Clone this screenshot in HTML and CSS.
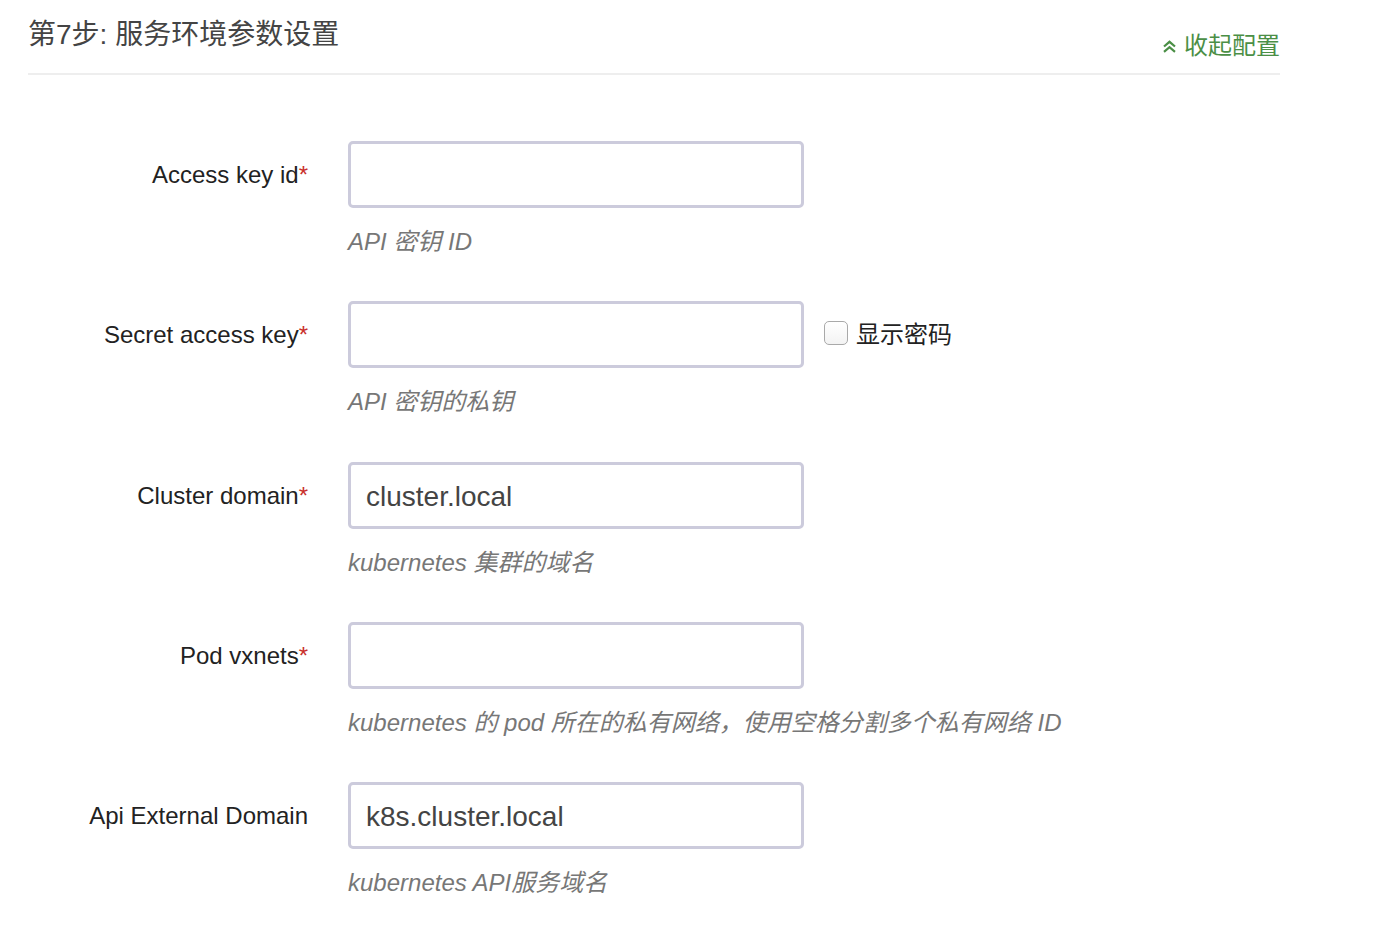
FILE: index.html
```html
<!DOCTYPE html>
<html lang="zh-CN">
<head>
<meta charset="utf-8">
<title>服务环境参数设置</title>
<link rel="stylesheet" href="styles.css">
</head>
<body>
<div class="page">
  <div class="section-header">
    <h3 class="section-title">第7步: 服务环境参数设置</h3>
    <a class="collapse-link" href="#">
      <svg class="chev" width="15" height="13" viewBox="0 0 15 13"><polyline points="2,6.5 7.5,1.8 13,6.5" fill="none" stroke="#4b8f46" stroke-width="2.2"/><polyline points="2,11.8 7.5,7.1 13,11.8" fill="none" stroke="#4b8f46" stroke-width="2.2"/></svg>
      收起配置
    </a>
  </div>

  <form class="env-form">
    <div class="form-group">
      <label class="control-label">Access key id<span class="req">*</span></label>
      <div class="controls">
        <div class="input-line"><input class="form-input" type="text" value=""></div>
        <p class="help">API 密钥 ID</p>
      </div>
    </div>

    <div class="form-group">
      <label class="control-label">Secret access key<span class="req">*</span></label>
      <div class="controls">
        <div class="input-line">
          <input class="form-input" type="password" value="">
          <label class="show-pwd"><span class="checkbox"></span>显示密码</label>
        </div>
        <p class="help">API 密钥的私钥</p>
      </div>
    </div>

    <div class="form-group">
      <label class="control-label">Cluster domain<span class="req">*</span></label>
      <div class="controls">
        <div class="input-line"><input class="form-input" type="text" value="cluster.local"></div>
        <p class="help">kubernetes 集群的域名</p>
      </div>
    </div>

    <div class="form-group">
      <label class="control-label">Pod vxnets<span class="req">*</span></label>
      <div class="controls">
        <div class="input-line"><input class="form-input" type="text" value=""></div>
        <p class="help">kubernetes 的 pod 所在的私有网络，使用空格分割多个私有网络 ID</p>
      </div>
    </div>

    <div class="form-group">
      <label class="control-label">Api External Domain</label>
      <div class="controls">
        <div class="input-line"><input class="form-input" type="text" value="k8s.cluster.local"></div>
        <p class="help">kubernetes API服务域名</p>
      </div>
    </div>
  </form>
</div>
</body>
</html>
```

FILE: styles.css
```css
* { box-sizing: border-box; }

html, body {
  margin: 0;
  padding: 0;
  background: #fff;
}

body {
  font-family: "Liberation Sans", "Noto Sans CJK SC", sans-serif;
  color: #222;
}

.page {
  padding-left: 28px;
  width: 1280px;
}

.section-header {
  display: flex;
  justify-content: space-between;
  align-items: flex-start;
  height: 75px;
  border-bottom: 2px solid #eeeeee;
}

.section-title {
  margin: 15px 0 0 0;
  font-size: 28px;
  line-height: 40px;
  font-weight: normal;
  color: #444;
}

.collapse-link {
  margin-top: 31px;
  font-size: 24px;
  line-height: 30px;
  color: #4b8f46;
  text-decoration: none;
  display: flex;
  align-items: center;
}

.chev {
  margin-right: 7px;
  margin-top: 1px;
}

.env-form {
  padding-top: 66px;
}

.form-group {
  display: flex;
  align-items: flex-start;
  height: 160.25px;
}

.control-label {
  width: 280px;
  height: 67px;
  line-height: 67px;
  text-align: right;
  font-size: 24px;
  color: #222;
}

.req {
  color: #c9302c;
}

.controls {
  margin-left: 40px;
}

.input-line {
  display: flex;
  align-items: center;
}

.form-input {
  width: 456px;
  height: 67px;
  border: 3px solid #cccbdc;
  border-radius: 5px;
  padding: 3px 15px 0 15px;
  font-family: "Liberation Sans", "Noto Sans CJK SC", sans-serif;
  font-size: 28px;
  color: #444;
  outline: none;
  background: #fff;
}

.show-pwd {
  display: flex;
  align-items: center;
  margin-left: 20px;
  margin-top: -4px;
  font-size: 24px;
  color: #222;
}

.checkbox {
  width: 24px;
  height: 24px;
  border: 1px solid #a9a9a9;
  border-radius: 5px;
  background: linear-gradient(#ffffff, #f3f3f3);
  margin-right: 8px;
}

.help {
  margin: 19px 0 0 0;
  font-size: 24px;
  line-height: 30px;
  font-style: italic;
  color: #777;
}
```
